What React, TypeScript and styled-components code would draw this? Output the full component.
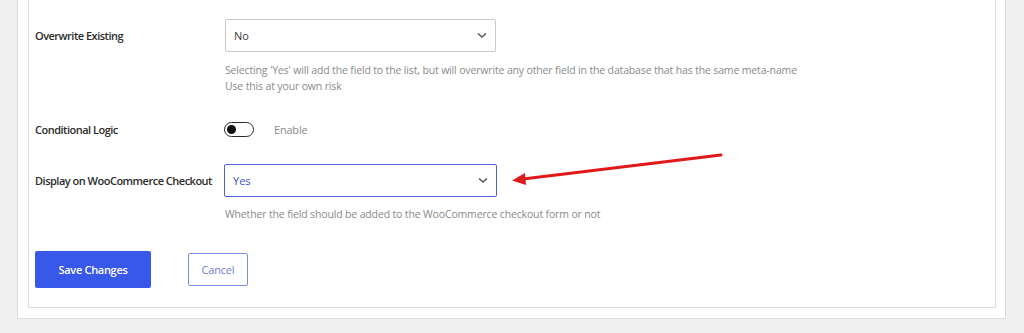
import React from "react";
import styled, { createGlobalStyle } from "styled-components";

const Global = createGlobalStyle`
  html, body { margin: 0; padding: 0; background: #f0f0f0; }
  body { font-family: "Open Sans", "Noto Sans", sans-serif; width: 1024px; height: 333px; overflow: hidden; }
`;

const Page = styled.div`
  position: relative;
  width: 1024px;
  height: 333px;
  padding-left: 17px;
  box-sizing: border-box;
`;

const Outer = styled.div`
  width: 989px;
  box-sizing: border-box;
  background: #fff;
  border: 1px solid #dcdcdc;
  border-top: none;
  padding: 0 9px 10px 10px;
`;

const Inner = styled.div`
  background: #fff;
  border: 1px solid #dcdcdc;
  border-top: none;
  padding: 19px 0 19px 6px;
  display: flex;
  flex-direction: column;
`;

const Row = styled.div<{ $mt?: number }>`
  display: grid;
  grid-template-columns: 190px 1fr;
  align-items: center;
  margin-top: ${(p) => p.$mt ?? 0}px;
`;

const Label = styled.div`
  font-size: 11px;
  font-weight: 600;
  letter-spacing: -0.5px;
  white-space: nowrap;
  color: #2c2c2c;
`;

const Select = styled.div<{ $active?: boolean }>`
  width: ${(p) => (p.$active ? "273px" : "271px")};
  height: 33px;
  box-sizing: border-box;
  border: ${(p) => (p.$active ? "1.5px solid #4d61dc" : "1px solid #c9c9c9")};
  border-radius: 2px;
  display: flex;
  align-items: center;
  justify-content: space-between;
  padding: 0 8px 0 8px;
  font-size: 11px;
  color: ${(p) => (p.$active ? "#3e4fcf" : "#3a3a3a")};
  margin-left: ${(p) => (p.$active ? "-1px" : "0")};
`;

const Help = styled.div<{ $mt?: number }>`
  margin-left: 190px;
  margin-top: ${(p) => p.$mt ?? 0}px;
  font-size: 10.5px;
  letter-spacing: -0.15px;
  line-height: 16px;
  color: #8a8a8a;
`;

const ToggleWrap = styled.div`
  display: flex;
  align-items: center;
  gap: 20px;
  margin-left: -1px;
`;

const Toggle = styled.div`
  width: 30px;
  height: 15px;
  box-sizing: border-box;
  border: 1.5px solid #2a2a2a;
  border-radius: 8px;
  display: flex;
  align-items: center;
  padding-left: 2px;
  &::before {
    content: "";
    width: 9px;
    height: 9px;
    border-radius: 50%;
    background: #111;
  }
`;

const ToggleText = styled.span`
  font-size: 11px;
  letter-spacing: -0.2px;
  color: #8a8a8a;
`;

const Buttons = styled.div`
  display: flex;
  align-items: center;
  gap: 37px;
  margin-top: 29px;
`;

const PrimaryButton = styled.button`
  width: 116px;
  height: 37px;
  background: #3858e9;
  border: none;
  border-radius: 2px;
  color: #fff;
  font-family: inherit;
  font-size: 11px;
  font-weight: 600;
  letter-spacing: -0.3px;
  padding: 0;
`;

const SecondaryButton = styled.button`
  width: 60px;
  height: 33px;
  background: #fff;
  border: 1px solid #7d8de0;
  border-radius: 2px;
  color: #6e7dd2;
  font-family: inherit;
  font-size: 11px;
  letter-spacing: -0.2px;
  padding: 0;
`;

const Annotation = styled.svg`
  position: absolute;
  left: 505px;
  top: 150px;
`;

const Chevron = () => (
  <svg width="10" height="7" viewBox="0 0 10 7">
    <path d="M1 1.5 L5 5 L9 1.5" fill="none" stroke="#555" strokeWidth="1.5" />
  </svg>
);

export default function App() {
  return (
    <>
      <Global />
      <Page>
        <Outer>
          <Inner>
            <Row>
              <Label>Overwrite Existing</Label>
              <Select>
                <span>No</span>
                <Chevron />
              </Select>
            </Row>
            <Help $mt={10}>
              Selecting 'Yes' will add the field to the list, but will overwrite any other field in the database that has the same meta-name
              <br />
              Use this at your own risk
            </Help>
            <Row $mt={28}>
              <Label>Conditional Logic</Label>
              <ToggleWrap>
                <Toggle />
                <ToggleText>Enable</ToggleText>
              </ToggleWrap>
            </Row>
            <Row $mt={27}>
              <Label>Display on WooCommerce Checkout</Label>
              <Select $active>
                <span>Yes</span>
                <Chevron />
              </Select>
            </Row>
            <Help $mt={9}>
              Whether the field should be added to the WooCommerce checkout form or not
            </Help>
            <Buttons>
              <PrimaryButton>Save Changes</PrimaryButton>
              <SecondaryButton>Cancel</SecondaryButton>
            </Buttons>
          </Inner>
        </Outer>
        <Annotation width="225" height="40" viewBox="0 0 225 40">
          <line x1="216" y1="5" x2="18" y2="29" stroke="#e0191b" strokeWidth="3" strokeLinecap="round" />
          <polygon points="7,30.5 20,23 21,35" fill="#e0191b" />
        </Annotation>
      </Page>
    </>
  );
}
